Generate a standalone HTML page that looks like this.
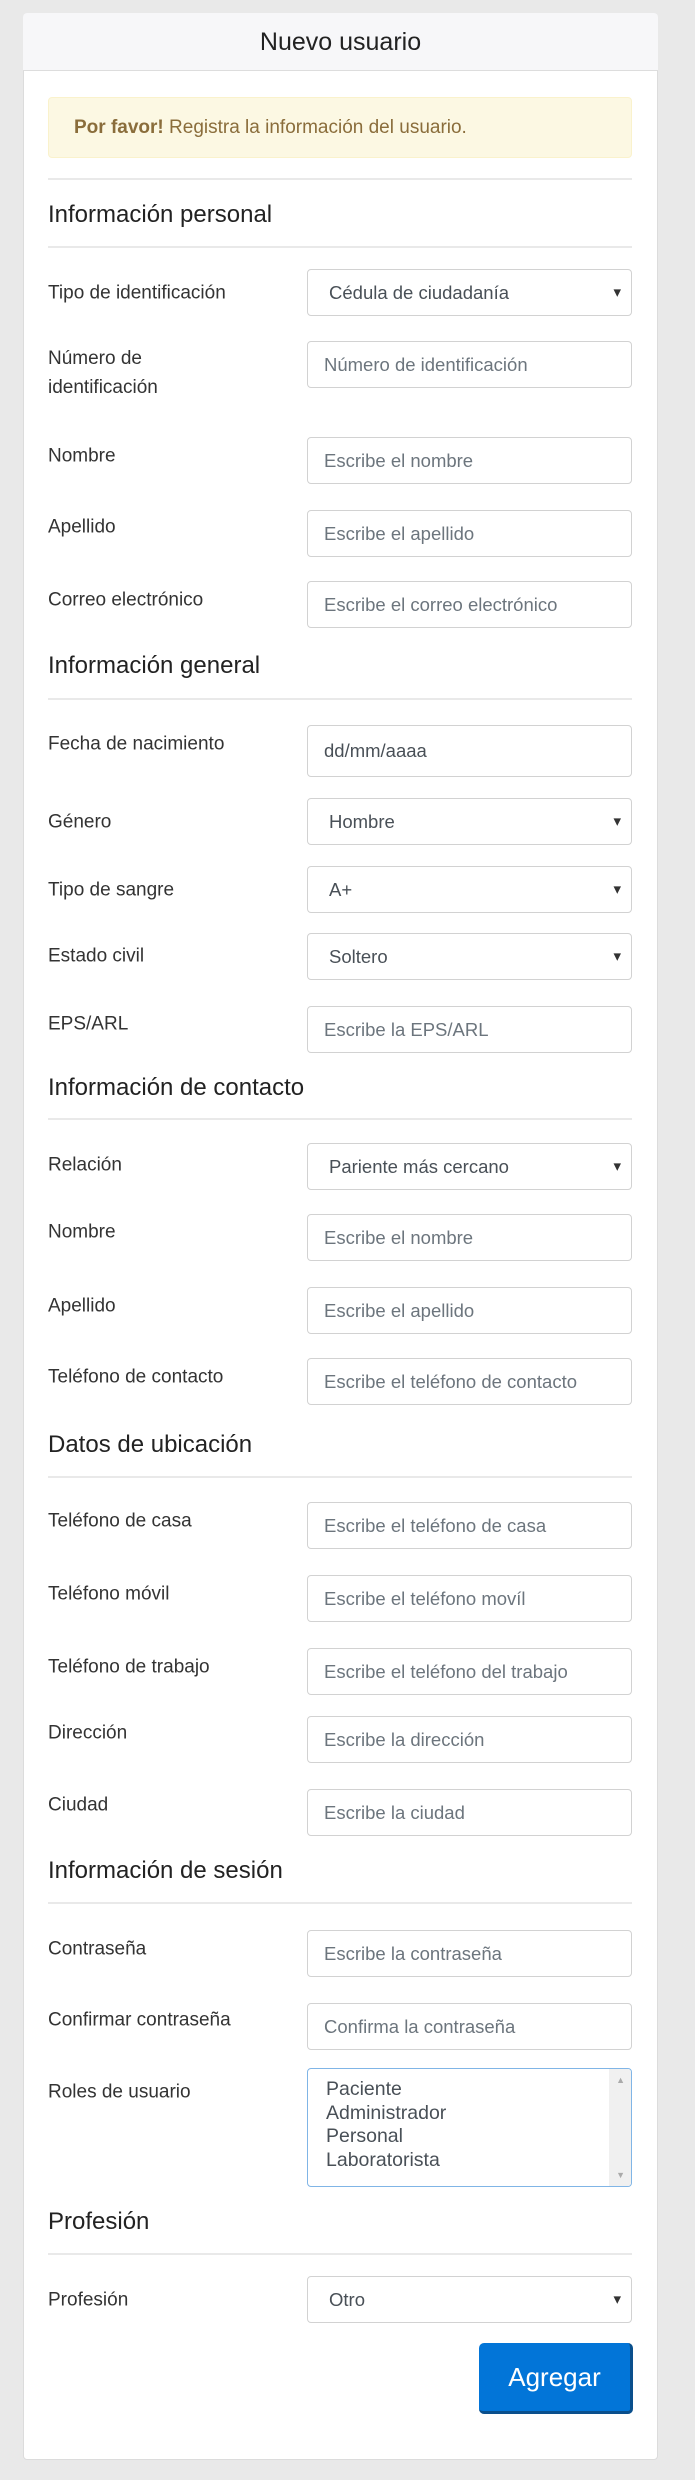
<!DOCTYPE html>
<html><head><meta charset="utf-8"><style>
body{margin:0;background:#e9e9e9;width:695px;height:2480px;position:relative;overflow:hidden;font-family:"Liberation Sans",sans-serif}
.card{position:absolute;left:23px;top:13px;width:635px;height:2447px;background:#fff;border:1px solid #dcdcdc;border-radius:4px;box-sizing:border-box}
.hd{position:absolute;left:23px;top:13px;width:635px;height:58px;background:#f7f7f9;border-bottom:1px solid #ddd;border-radius:4px 4px 0 0;box-sizing:border-box;text-align:center;line-height:58px;font-size:25px;color:#222}
.al{position:absolute;left:48px;top:97px;width:584px;height:61px;background:#fcf8e3;border:1px solid #faf2cc;border-radius:4px;box-sizing:border-box;color:#8a6d3b;font-size:19px;line-height:59px;padding-left:25px}
.hr{position:absolute;left:48px;width:584px;height:2px;background:#e9e9e9}
.h{position:absolute;left:48px;font-size:24px;color:#222;transform:translateY(-50%);white-space:nowrap}
.l{position:absolute;left:48px;font-size:19px;color:#333;transform:translateY(-50%);white-space:nowrap;line-height:29px}
.i,.s{position:absolute;left:307px;width:325px;height:47px;border:1px solid #d2d2d2;border-radius:4px;box-sizing:border-box;font-size:18.5px;line-height:45px;color:#6c757d;padding-left:16px;white-space:nowrap;background:#fff}
.s{color:#495057;padding-left:21px}
.s:after{content:"▾";position:absolute;right:10px;top:0;font-size:15px;color:#333}
.d{color:#495057}
</style></head><body>
<div class="card"></div>
<div class="hd">Nuevo usuario</div>
<div class="al"><b>Por favor!</b> Registra la información del usuario.</div>
<div class="hr" style="top:178px"></div>
<div class="h" style="top:215px">Información personal</div>
<div class="hr" style="top:246px"></div>
<div class="l" style="top:293px">Tipo de identificación</div><div class="s" style="top:269px">Cédula de ciudadanía</div>
<div class="l" style="top:373px">Número de<br>identificación</div><div class="i" style="top:341px">Número de identificación</div>
<div class="l" style="top:456px">Nombre</div><div class="i" style="top:437px">Escribe el nombre</div>
<div class="l" style="top:527px">Apellido</div><div class="i" style="top:510px">Escribe el apellido</div>
<div class="l" style="top:600px">Correo electrónico</div><div class="i" style="top:581px">Escribe el correo electrónico</div>
<div class="h" style="top:666px">Información general</div>
<div class="hr" style="top:698px"></div>
<div class="l" style="top:744px">Fecha de nacimiento</div><div class="i d" style="top:725px;height:52px;line-height:50px">dd/mm/aaaa</div>
<div class="l" style="top:822px">Género</div><div class="s" style="top:798px">Hombre</div>
<div class="l" style="top:890px">Tipo de sangre</div><div class="s" style="top:866px">A+</div>
<div class="l" style="top:956px">Estado civil</div><div class="s" style="top:933px">Soltero</div>
<div class="l" style="top:1024px">EPS/ARL</div><div class="i" style="top:1006px">Escribe la EPS/ARL</div>
<div class="h" style="top:1088px">Información de contacto</div>
<div class="hr" style="top:1118px"></div>
<div class="l" style="top:1165px">Relación</div><div class="s" style="top:1143px">Pariente más cercano</div>
<div class="l" style="top:1232px">Nombre</div><div class="i" style="top:1214px">Escribe el nombre</div>
<div class="l" style="top:1306px">Apellido</div><div class="i" style="top:1287px">Escribe el apellido</div>
<div class="l" style="top:1377px">Teléfono de contacto</div><div class="i" style="top:1358px">Escribe el teléfono de contacto</div>
<div class="h" style="top:1445px">Datos de ubicación</div>
<div class="hr" style="top:1476px"></div>
<div class="l" style="top:1521px">Teléfono de casa</div><div class="i" style="top:1502px">Escribe el teléfono de casa</div>
<div class="l" style="top:1594px">Teléfono móvil</div><div class="i" style="top:1575px">Escribe el teléfono movíl</div>
<div class="l" style="top:1667px">Teléfono de trabajo</div><div class="i" style="top:1648px">Escribe el teléfono del trabajo</div>
<div class="l" style="top:1733px">Dirección</div><div class="i" style="top:1716px">Escribe la dirección</div>
<div class="l" style="top:1805px">Ciudad</div><div class="i" style="top:1789px">Escribe la ciudad</div>
<div class="h" style="top:1871px">Información de sesión</div>
<div class="hr" style="top:1902px"></div>
<div class="l" style="top:1949px">Contraseña</div><div class="i" style="top:1930px">Escribe la contraseña</div>
<div class="l" style="top:2020px">Confirmar contraseña</div><div class="i" style="top:2003px">Confirma la contraseña</div>
<div class="l" style="top:2092px">Roles de usuario</div>
<div style="position:absolute;left:307px;top:2068px;width:325px;height:119px;border:1px solid #80b5e6;border-radius:4px;box-sizing:border-box;overflow:hidden;background:#fff">
<div style="position:absolute;right:0;top:0;width:22px;height:100%;background:#f0f0f0"></div>
<div style="position:absolute;right:6px;top:6px;font-size:9px;color:#aaa">▲</div>
<div style="position:absolute;right:6px;bottom:6px;font-size:9px;color:#aaa">▼</div>
<div style="position:absolute;left:18px;top:9px;font-size:19.5px;line-height:23.5px;color:#495057">Paciente<br>Administrador<br>Personal<br>Laboratorista</div>
</div>
<div class="h" style="top:2222px">Profesión</div>
<div class="hr" style="top:2253px"></div>
<div class="l" style="top:2300px">Profesión</div><div class="s" style="top:2276px">Otro</div>
<div style="position:absolute;left:479px;top:2343px;width:154px;height:71px;background:#0275d8;border-radius:5px;border-right:3px solid #0a4f8c;border-bottom:3px solid #0a4f8c;box-sizing:border-box;color:#fff;font-size:26px;text-align:center;line-height:68px">Agregar</div>
</body></html>
